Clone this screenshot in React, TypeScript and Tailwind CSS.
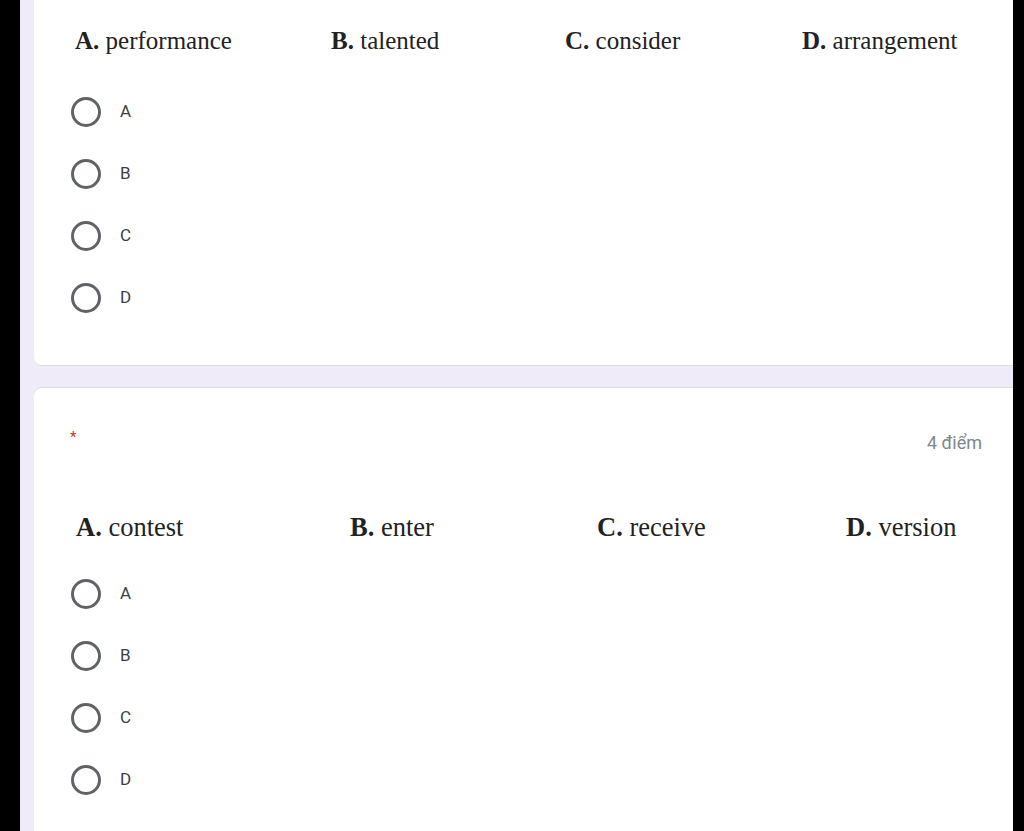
const options = ["A", "B", "C", "D"];

type Choice = { letter: string; word: string };

const firstRow: Choice[] = [
  { letter: "A.", word: "performance" },
  { letter: "B.", word: "talented" },
  { letter: "C.", word: "consider" },
  { letter: "D.", word: "arrangement" },
];

const secondRow: Choice[] = [
  { letter: "A.", word: "contest" },
  { letter: "B.", word: "enter" },
  { letter: "C.", word: "receive" },
  { letter: "D.", word: "version" },
];

const ChoiceCell = ({ c }: { c: Choice }) => (
  <span className="whitespace-nowrap">
    <b className="font-bold">{c.letter}</b> {c.word}
  </span>
);

const RadioList = () => (
  <div className="flex flex-col pl-[37px]">
    {options.map((o) => (
      <label key={o} className="flex h-[62px] items-center gap-[19px]">
        <span className="h-[30px] w-[30px] rounded-full border-[3px] border-[#5f6368]" />
        <span className="text-[17px] text-[#3c4043] font-['Roboto',sans-serif]">{o}</span>
      </label>
    ))}
  </div>
);

export default function App() {
  return (
    <div className="flex h-[831px] overflow-hidden bg-black pl-[20px] pr-[11px]">
      <div className="flex flex-1 flex-col bg-[#efebf8] pl-[14px]">
        {/* first question (top cut off) */}
        <div className="h-[366px] shrink-0 rounded-bl-lg border-b border-[#dadce0] bg-white pt-[27px]">
          <div className="grid grid-cols-[256px_234px_237px_1fr] pl-[41px] text-[25px] leading-[28px] text-[#222] font-['Liberation_Serif',serif]">
            {firstRow.map((c) => (
              <ChoiceCell key={c.letter} c={c} />
            ))}
          </div>
          <div className="mt-[26px]">
            <RadioList />
          </div>
        </div>

        {/* second question */}
        <div className="mt-[21px] flex-1 rounded-tl-lg border-t border-[#dadce0] bg-white pt-[39px]">
          <div className="flex items-start justify-between pl-[36px] pr-[31px]">
            <span className="text-[15px] leading-[20px] text-[#d93025] font-['Roboto',sans-serif]">*</span>
            <span className="text-[18px] leading-[32px] text-[#80868b] font-['Roboto',sans-serif]">
              4 điểm
            </span>
          </div>
          <div className="mt-[54px] grid grid-cols-[274px_247px_249px_1fr] pl-[42px] text-[26.5px] leading-[28px] text-[#222] font-['Liberation_Serif',serif]">
            {secondRow.map((c) => (
              <ChoiceCell key={c.letter} c={c} />
            ))}
          </div>
          <div className="mt-[22px]">
            <RadioList />
          </div>
        </div>
      </div>
    </div>
  );
}
